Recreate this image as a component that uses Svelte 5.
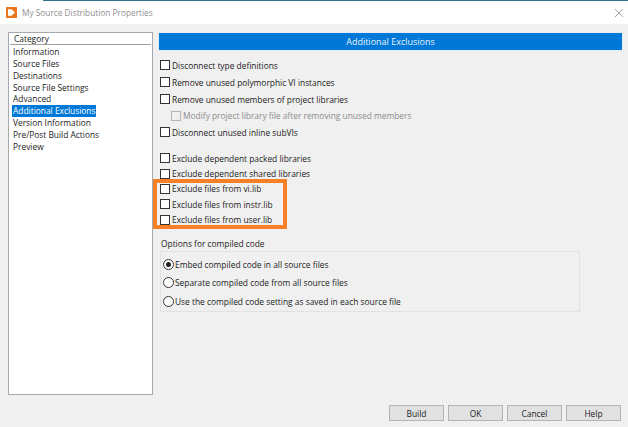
<script lang="ts">
  const categories = [
    'Information',
    'Source Files',
    'Destinations',
    'Source File Settings',
    'Advanced',
    'Additional Exclusions',
    'Version Information',
    'Pre/Post Build Actions',
    'Preview'
  ];
  const selected = 'Additional Exclusions';

  const radios = [
    'Embed compiled code in all source files',
    'Separate compiled code from all source files',
    'Use the compiled code setting as saved in each source file'
  ];
  const buttons = ['Build', 'OK', 'Cancel', 'Help'];
</script>

<div class="window">
  <div class="strip"></div>
  <div class="titlebar">
    <svg class="logo" width="11" height="11" viewBox="0 0 11 11">
      <rect width="11" height="11" rx="0.5" fill="#e8761f" />
      <path d="M2 2.2h3.6L9 5.5 5.6 8.8H2z" fill="#fff" />
    </svg>
    <span class="title">My Source Distribution Properties</span>
    <svg class="close" width="8" height="8" viewBox="0 0 8 8">
      <path d="M0 0l8 8M8 0L0 8" stroke="#a6a6a6" stroke-width="1" fill="none" />
    </svg>
  </div>

  <div class="body">
    <div class="main">
      <div class="sidebar">
        <div class="sidehead">Category</div>
        {#each categories as cat}
          <div class="cat" class:sel={cat === selected}><span>{cat}</span></div>
        {/each}
      </div>

      <div class="panel">
        <div class="banner">Additional Exclusions</div>

        <div class="group first">
          <label class="check"><i class="box"></i>Disconnect type definitions</label>
          <label class="check"><i class="box"></i>Remove unused polymorphic VI instances</label>
          <label class="check"><i class="box"></i>Remove unused members of project libraries</label>
          <label class="check sub"><i class="box off"></i>Modify project library file after removing unused members</label>
          <label class="check"><i class="box"></i>Disconnect unused inline subVIs</label>
        </div>

        <div class="group second">
          <label class="check tight"><i class="box"></i>Exclude dependent packed libraries</label>
          <label class="check tight"><i class="box"></i>Exclude dependent shared libraries</label>
          <div class="highlight">
            <label class="check tight"><i class="box"></i>Exclude files from vi.lib</label>
            <label class="check tight"><i class="box"></i>Exclude files from instr.lib</label>
            <label class="check tight"><i class="box"></i>Exclude files from user.lib</label>
          </div>
        </div>

        <div class="options-label">Options for compiled code</div>
        <div class="options">
          {#each radios as r, i}
            <label class="radio"><i class="dot" class:on={i === 0}></i>{r}</label>
          {/each}
        </div>
      </div>
    </div>

    <div class="footer">
      {#each buttons as b}
        <button>{b}</button>
      {/each}
    </div>
  </div>
</div>

<style>
  :global(body) {
    margin: 0;
    background: #f0f0f0;
  }

  .window {
    width: 628px;
    height: 427px;
    display: flex;
    flex-direction: column;
    font-family: "Open Sans", "Liberation Sans", sans-serif;
    font-size: 8.4px;
    color: #222;
    overflow: hidden;
  }

  .strip {
    height: 1px;
    flex: none;
    background: linear-gradient(to right, #fff 43px, #2f7391 43px);
  }

  .titlebar {
    height: 23px;
    background: #fff;
    display: flex;
    align-items: center;
    padding: 0 5px 0 6px;
    gap: 5px;
    flex: none;
  }
  .title {
    font-size: 8.3px;
    color: #8f8f8f;
    flex: 1;
  }

  .body {
    flex: 1;
    display: flex;
    flex-direction: column;
    padding: 8px 7px 6px 8px;
    min-height: 0;
  }
  .main {
    flex: 1;
    display: flex;
    gap: 5px;
    min-height: 0;
  }

  .sidebar {
    width: 145px;
    height: 363px;
    box-sizing: border-box;
    background: #fff;
    border: 1px solid #a6a9b0;
    padding: 0 1px;
    flex: none;
  }
  .sidehead {
    height: 11px;
    line-height: 12px;
    padding-left: 4px;
    border-bottom: 1px solid #a0a0a0;
    margin-bottom: 1px;
  }
  .cat {
    height: 11.85px;
    line-height: 12px;
    padding-left: 2px;
    white-space: nowrap;
  }
  .cat span {
    padding: 0 1px;
    display: inline-block;
  }
  .cat.sel span {
    background: #0078d7;
    color: #fff;
  }

  .panel {
    flex: 1;
    min-width: 0;
  }
  .banner {
    height: 19px;
    line-height: 17px;
    background: #0078d7;
    color: #e8f2fb;
    text-align: center;
    font-size: 9px;
    border: 1px solid #e3eef8;
    box-sizing: border-box;
    margin-right: -2px;
  }

  .check {
    display: flex;
    align-items: center;
    height: 17px;
    white-space: nowrap;
    padding-left: 2px;
  }
  .check.tight {
    height: 15.4px;
  }
  .check.sub {
    padding-left: 13px;
    color: #8c8c8c;
    height: 16px;
  }
  .box {
    width: 8px;
    height: 8px;
    border: 1px solid #333;
    background: #fff;
    margin-right: 2px;
    flex: none;
  }
  .box.off {
    border-color: #b5b5b5;
    background: #f0f0f0;
  }

  .group.first {
    margin-top: 5.5px;
  }
  .group.second {
    margin-top: 10px;
  }

  .highlight {
    margin-left: -3px;
    padding-left: 3px;
    width: 130px;
    box-sizing: border-box;
    outline: 4px solid #f58025;
    outline-offset: -2px;
  }

  .options-label {
    margin: 10.5px 0 0 3px;
    height: 12px;
    line-height: 12px;
  }
  .options {
    margin: 1px 41px 0 2px;
    border: 1px solid #e2e2e2;
    padding-top: 3px;
    height: 61px;
    box-sizing: border-box;
  }
  .radio {
    display: flex;
    align-items: center;
    height: 18.5px;
    padding-left: 2px;
    white-space: nowrap;
  }
  .dot {
    width: 9px;
    height: 9px;
    border: 1px solid #333;
    border-radius: 50%;
    background: #fff;
    margin-right: 1px;
    flex: none;
    position: relative;
  }
  .dot.on::after {
    content: "";
    position: absolute;
    left: 2px;
    top: 2px;
    width: 5px;
    height: 5px;
    border-radius: 50%;
    background: #222;
  }

  .footer {
    display: flex;
    justify-content: flex-end;
    gap: 4px;
    flex: none;
  }
  button {
    width: 53px;
    height: 14px;
    padding: 0;
    background: #e1e1e1;
    border: 1px solid #b4b4b4;
    font: inherit;
    color: #222;
    box-sizing: content-box;
  }
</style>
